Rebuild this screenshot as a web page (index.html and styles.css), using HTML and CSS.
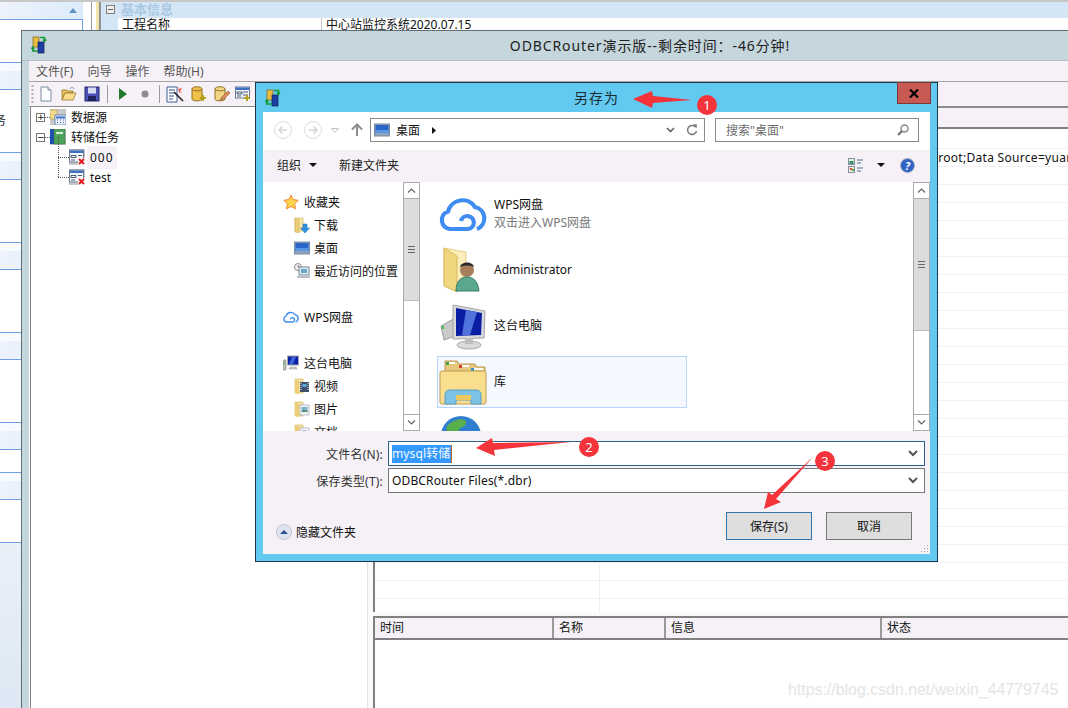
FILE: index.html
```html
<!DOCTYPE html>
<html lang="zh-CN">
<head>
    <meta charset="UTF-8">
    <title>ODBCRouter 另存为</title>
    <link rel="stylesheet" href="styles.css">
</head>
<body>
    <svg class="sprite" xmlns="http://www.w3.org/2000/svg">
        <symbol id="i-app" viewBox="0 0 16 18">
            <rect x="2" y="1" width="6" height="10" fill="#e9bb3f" stroke="#7d6420" stroke-width=".7"/>
            <rect x="7" y="6" width="6" height="11" fill="#1c3ea6" stroke="#10204f" stroke-width=".7"/>
            <path d="M9 1.500h4.500v3.500M12 3.500l1.500 2 1.500-2" fill="none" stroke="#179a34" stroke-width="1.600"/>
            <path d="M7 15H1.800v-3.500M.4 13l1.400-2 1.500 2" fill="none" stroke="#179a34" stroke-width="1.600"/>
        </symbol>
        <symbol id="i-new" viewBox="0 0 16 16">
            <path d="M3 1h7l3 3v11H3z" fill="#fbfdff" stroke="#7d8ea3"/>
            <path d="M10 1v3h3" fill="#dfe7f2" stroke="#7d8ea3"/>
        </symbol>
        <symbol id="i-open" viewBox="0 0 16 16">
            <path d="M1 4h5l1 1h5v2H4L1 14z" fill="#e8c25e" stroke="#9a7a2c" stroke-width=".8"/>
            <path d="M1 14l3-7h11l-3 7z" fill="#f7dc8c" stroke="#9a7a2c" stroke-width=".8"/>
            <path d="M9 3c1-2 3-2 4 0" fill="none" stroke="#5f87b5"/>
        </symbol>
        <symbol id="i-save" viewBox="0 0 16 16">
            <rect x="1" y="1" width="14" height="14" fill="#4c51b8" stroke="#25286e"/>
            <rect x="4" y="1.500" width="8" height="6" fill="#d7dcf2"/>
            <rect x="4" y="10" width="8" height="5" fill="#1f2258"/>
        </symbol>
        <symbol id="i-wand" viewBox="0 0 18 18">
            <path d="M1 2h10v15H1z" fill="#fff" stroke="#3a5f95"/>
            <path d="M3 5h6M3 8h5M3 11h5M3 14h4" stroke="#2c4f8a"/>
            <path d="M8 7l9 9" stroke="#222" stroke-width="1.600"/>
            <path d="M12 1l1 3 3-1-2 3 2 2-3-1" fill="#e8452e"/>
        </symbol>
        <symbol id="i-dbadd" viewBox="0 0 16 16">
            <path d="M1 3c0-3 10-3 10 0v10c0 2.500-10 2.500-10 0z" fill="#eec04a" stroke="#8f7125"/>
            <path d="M1 3c0 2.500 10 2.500 10 0" fill="none" stroke="#8f7125"/>
            <path d="M12 9v6M9 12h6" stroke="#b6a21d" stroke-width="2"/>
        </symbol>
        <symbol id="i-dbedit" viewBox="0 0 16 16">
            <path d="M1 3c0-3 10-3 10 0v10c0 2.500-10 2.500-10 0z" fill="#f2d784" stroke="#8f7125"/>
            <path d="M1 3c0 2.500 10 2.500 10 0" fill="none" stroke="#8f7125"/>
            <path d="M6 14l2-3 6-6 2 2-6 6z" fill="#e08a5a" stroke="#7c5a33" stroke-width=".6"/>
        </symbol>
        <symbol id="i-tabadd" viewBox="0 0 16 16">
            <rect x="0.500" y="1" width="14" height="11" fill="#f2f5fa" stroke="#6a7a92"/>
            <rect x="1" y="1.500" width="13" height="2.500" fill="#3d6fc2"/>
            <path d="M2 6h5v2H2zM8 6h5M8 9h5M2 10h4" fill="none" stroke="#4a5a72"/>
            <path d="M12 9v6M9 12h6" stroke="#b6a21d" stroke-width="2"/>
        </symbol>
        <symbol id="i-source" viewBox="0 0 16 16">
            <rect width="16" height="16" fill="#c9c9c9"/>
            <path d="M0 1h7v9H0z" fill="#f3d98a" stroke="#b79a45" stroke-width=".6"/>
            <rect x="5" y="6" width="11" height="10" fill="#eef3fb" stroke="#4f73ad" stroke-width=".8"/>
            <path d="M6 8.500h9" stroke="#3d6fc2" stroke-width="2"/>
            <path d="M7 11h1M10 11h1M13 11h1M7 13.500h1M10 13.500h1M13 13.500h1" stroke="#3a5f95"/>
        </symbol>
        <symbol id="i-book" viewBox="0 0 16 16">
            <rect width="16" height="16" fill="#c9c9c9"/>
            <rect x="0" y="0" width="4" height="15" fill="#1d4fb0"/>
            <rect x="4" y="0" width="11" height="15" fill="#4ea35a" stroke="#2f6f3a" stroke-width=".6"/>
            <rect x="6" y="3" width="7" height="2" fill="#d7eed9"/>
        </symbol>
        <symbol id="i-task" viewBox="0 0 16 16">
            <rect width="16" height="16" fill="#c9c9c9"/>
            <rect x="0.500" y="1" width="14" height="12" fill="#f5f7fb" stroke="#6a7a92"/>
            <rect x="1" y="1.500" width="13" height="2.500" fill="#3d6fc2"/>
            <path d="M2 6.500h5v2H2zM9 6.500h4M9 9.500h4M2 11h4" fill="none" stroke="#4a5a72"/>
            <rect x="9" y="9" width="7" height="7" fill="#fff"/>
            <path d="M10 10l5 5M15 10l-5 5" stroke="#e01b24" stroke-width="2"/>
        </symbol>
        <symbol id="i-star" viewBox="0 0 16 16">
            <path d="M8 1l2.200 4.600 5 .7-3.600 3.500.9 5L8 12.400 3.500 14.800l.9-5L.8 6.300l5-.7z" fill="#fbd24f" stroke="#ef8b2c"/>
        </symbol>
        <symbol id="i-folder" viewBox="0 0 16 16">
            <path d="M1 1h8v13H1z" fill="#f6e3a2" stroke="#d4b765" stroke-width=".7"/>
            <path d="M1 1l4 2v13l-4-1z" fill="#edcd78" stroke="#c9a850" stroke-width=".5"/>
            <path d="M9 7h4v4h2.500L11 16l-4.500-5H9z" fill="#2f8fe0" stroke="#1d6fb5" stroke-width=".5"/>
        </symbol>
        <symbol id="i-desk" viewBox="0 0 16 14">
            <rect x="0.500" y="1" width="15" height="12" fill="#8ea3bb" stroke="#7a8ca3"/>
            <rect x="1.500" y="2" width="13" height="8" fill="#2a66c8"/>
            <rect x="1.500" y="7" width="13" height="3" fill="#5a97e2"/>
        </symbol>
        <symbol id="i-recent" viewBox="0 0 16 16">
            <circle cx="4" cy="4" r="3.500" fill="#f2f2f2" stroke="#8b8b8b"/>
            <path d="M4 2v2h2" fill="none" stroke="#666" stroke-width=".7"/>
            <rect x="5" y="4" width="10" height="8" fill="#dfe9f2" stroke="#7d8a96"/>
            <rect x="7" y="6" width="6" height="4" fill="#6aa8c9"/>
            <path d="M3 13h13v2H3z" fill="#b9bec4"/>
        </symbol>
        <symbol id="i-cloud" viewBox="0 0 48 40">
            <path d="M14 35h-3A9 9 0 0 1 9 17.500 15 15 0 0 1 36 13a11.500 11.500 0 0 1 2 22M14 35h15a6.500 6.500 0 1 0-7-8" fill="none" stroke="#3f8cf2" stroke-width="4.200"/>
        </symbol>
        <symbol id="i-pc" viewBox="0 0 16 16">
            <rect x="0" y="5" width="3" height="10" fill="#bcbcbc" stroke="#777" stroke-width=".5"/>
            <rect x="1" y="7" width="1" height="2" fill="#3bbb3b"/>
            <rect x="4.500" y="1" width="11" height="9" fill="#0c1fa8" stroke="#a7a9ad"/>
            <path d="M9 2l4 0-3 7H6z" fill="#3f66d8"/>
            <path d="M7 12h6l1 2H6z" fill="#cfcfcf" stroke="#8f8f8f" stroke-width=".5"/>
        </symbol>
        <symbol id="i-video" viewBox="0 0 16 16">
            <path d="M1 1h8v14H1z" fill="#f6e3a2" stroke="#d4b765" stroke-width=".7"/>
            <path d="M1 1l4 2v13l-4-1z" fill="#edcd78"/>
            <rect x="6" y="4" width="9" height="10" fill="#40506a"/>
            <path d="M7 5v8M14 5v8" stroke="#d9e2ee" stroke-dasharray="1 1"/>
            <rect x="8.500" y="6" width="4" height="3" fill="#5fa7d9"/>
        </symbol>
        <symbol id="i-pic" viewBox="0 0 16 16">
            <path d="M1 1h8v14H1z" fill="#f6e3a2" stroke="#d4b765" stroke-width=".7"/>
            <path d="M1 1l4 2v13l-4-1z" fill="#edcd78"/>
            <rect x="6" y="4" width="9" height="10" fill="#f2f4f7" stroke="#9aa5b1" stroke-width=".7"/>
            <rect x="7.500" y="6" width="6" height="5" fill="#7ab3c9"/>
            <path d="M7.500 11l2-2.500 2 1.500 2-1v2z" fill="#55825f"/>
        </symbol>
        <symbol id="i-doc" viewBox="0 0 16 16">
            <path d="M1 1h8v14H1z" fill="#f6e3a2" stroke="#d4b765" stroke-width=".7"/>
            <path d="M1 1l4 2v13l-4-1z" fill="#edcd78"/>
            <rect x="6" y="4" width="9" height="10" fill="#f7f8fa" stroke="#9aa5b1" stroke-width=".7"/>
            <path d="M8 7h5M8 9h5M8 11h5" stroke="#6d8fb5"/>
        </symbol>
    </svg>

    <!-- 后面那个窗口，只露出一点 -->
    <div class="back-window">
        <div class="side-panel">
            <div class="side-head first"><span class="side-arrow"></span></div>
            <div class="side-body sb-short"></div>
            <div class="side-head"></div>
            <div class="side-body sb-tall"><span class="side-text">务</span></div>
            <div class="side-head"></div>
            <div class="side-body sb-tall"></div>
            <div class="side-head"></div>
            <div class="side-body sb-tall"></div>
            <div class="side-head"></div>
            <div class="side-body sb-tall"></div>
            <div class="side-head"></div>
            <div class="side-body sb-tiny"></div>
            <div class="side-head"></div>
            <div class="side-body sb-short"></div>
            <div class="side-rest"></div>
        </div>
        <div class="back-splitter"></div>
        <div class="prop-grid">
            <div class="prop-group">
                <span class="prop-toggle"></span>
                <span>基本信息</span>
            </div>
            <div class="prop-row">
                <div class="prop-name">工程名称</div>
                <div class="prop-value">中心站监控系统2020.07.15</div>
            </div>
        </div>
    </div>

    <div class="main-window">
        <div class="main-title">
            <svg class="main-title-icon" width="16" height="18"><use href="#i-app"/></svg>
            <span>ODBCRouter演示版--剩余时间：-46分钟!</span>
        </div>
        <div class="main-inner">
            <div class="menu-bar">
                <span>文件(F)</span>
                <span>向导</span>
                <span>操作</span>
                <span>帮助(H)</span>
            </div>
            <div class="tool-bar">
                <span class="gripper"></span>
                <svg width="16" height="16"><use href="#i-new"/></svg>
                <svg width="16" height="16"><use href="#i-open"/></svg>
                <svg width="16" height="16"><use href="#i-save"/></svg>
                <span class="tool-sep"></span>
                <svg class="tool-play" width="10" height="14" viewBox="0 0 10 14"><path d="M1 1l8 6-8 6z" fill="#1f7a2e"/></svg>
                <svg class="tool-stop" width="10" height="10" viewBox="0 0 10 10"><circle cx="5" cy="5" r="3.500" fill="#8d8d8d"/></svg>
                <span class="tool-sep"></span>
                <svg width="18" height="18"><use href="#i-wand"/></svg>
                <svg width="16" height="16"><use href="#i-dbadd"/></svg>
                <svg width="16" height="16"><use href="#i-dbedit"/></svg>
                <svg class="tool-last" width="16" height="16"><use href="#i-tabadd"/></svg>
            </div>
            <div class="main-body">
                <div class="tree">
                    <div class="tree-row">
                        <span class="expander">+</span>
                        <svg width="16" height="16"><use href="#i-source"/></svg>
                        <span class="tree-label">数据源</span>
                    </div>
                    <div class="tree-row">
                        <span class="expander">−</span>
                        <svg width="16" height="16"><use href="#i-book"/></svg>
                        <span class="tree-label">转储任务</span>
                    </div>
                    <div class="tree-row child">
                        <svg width="16" height="16"><use href="#i-task"/></svg>
                        <span class="tree-label selected">000</span>
                    </div>
                    <div class="tree-row child">
                        <svg width="16" height="16"><use href="#i-task"/></svg>
                        <span class="tree-label">test</span>
                    </div>
                </div>
                <div class="right-pane">
                    <div class="grid-area">
                        <div class="grid-head"></div>
                        <div class="grid-row"></div>
                        <div class="grid-row"><span class="conn-text">=root;Data Source=yuan</span></div>
                        <div class="grid-row"></div>
                        <div class="grid-row"></div>
                        <div class="grid-row"></div>
                        <div class="grid-row"></div>
                        <div class="grid-row"></div>
                        <div class="grid-row"></div>
                        <div class="grid-row"></div>
                        <div class="grid-row"></div>
                        <div class="grid-row"></div>
                        <div class="grid-row"></div>
                        <div class="grid-row"></div>
                        <div class="grid-row"></div>
                        <div class="grid-row"></div>
                        <div class="grid-row"></div>
                        <div class="grid-row"></div>
                        <div class="grid-row"></div>
                        <div class="grid-row"></div>
                        <div class="grid-row"></div>
                        <div class="grid-row"></div>
                        <div class="grid-row"></div>
                        <div class="grid-row"></div>
                        <div class="grid-row"></div>
                        <div class="grid-row"></div>
                        <div class="grid-row"></div>
                    </div>
                    <div class="log-area">
                        <div class="log-head">
                            <div class="log-col col-time">时间</div>
                            <div class="log-col col-name">名称</div>
                            <div class="log-col col-info">信息</div>
                            <div class="log-col col-state">状态</div>
                        </div>
                    </div>
                </div>
            </div>
        </div>
    </div>

    <div class="dialog">
        <div class="dialog-title">
            <svg class="dialog-icon" width="16" height="18"><use href="#i-app"/></svg>
            <span>另存为</span>
            <div class="dialog-close">
                <svg width="10" height="9" viewBox="0 0 10 9"><path d="M1 .5l8 8M9 .5l-8 8" stroke="#000" stroke-width="2.200"/></svg>
            </div>
        </div>
        <div class="dialog-client">
            <div class="nav-row">
                <svg class="nav-btn" width="18" height="18" viewBox="0 0 18 18"><circle cx="9" cy="9" r="8.500" fill="#fff" stroke="#dcdcdc"/><path d="M13 9H5M8.500 5.500L5 9l3.500 3.500" fill="none" stroke="#d4d4d4" stroke-width="1.500"/></svg>
                <svg class="nav-btn forward" width="18" height="18" viewBox="0 0 18 18"><circle cx="9" cy="9" r="8.500" fill="#fff" stroke="#dcdcdc"/><path d="M5 9h8M9.500 5.500L13 9l-3.500 3.500" fill="none" stroke="#d4d4d4" stroke-width="1.500"/></svg>
                <svg class="nav-drop" width="8" height="5" viewBox="0 0 8 5"><path d="M.5.500h7L4 4.500z" fill="#fff" stroke="#c4c4c4"/></svg>
                <svg class="nav-up" width="12" height="14" viewBox="0 0 12 14"><path d="M6 13V2M1 6.500L6 1.500l5 5" fill="none" stroke="#8c8c8c" stroke-width="2"/></svg>
                <div class="address">
                    <svg width="16" height="14"><use href="#i-desk"/></svg>
                    <span class="address-text">桌面</span>
                    <svg class="crumb" width="4" height="7" viewBox="0 0 4 7"><path d="M0 0l4 3.500L0 7z" fill="#111"/></svg>
                    <svg class="addr-chevron" width="9" height="6" viewBox="0 0 9 6"><path d="M1 1l3.500 3.500L8 1" fill="none" stroke="#666" stroke-width="1.600"/></svg>
                    <svg class="addr-refresh" width="12" height="12" viewBox="0 0 12 12"><path d="M9.500 3A4.500 4.500 0 1 0 10.500 7" fill="none" stroke="#7d7d7d" stroke-width="1.500"/><path d="M7 0l4 .500-.500 4z" fill="#7d7d7d"/></svg>
                </div>
                <div class="search">
                    <span>搜索"桌面"</span>
                    <svg width="12" height="12" viewBox="0 0 12 12"><circle cx="7.500" cy="4.500" r="3.500" fill="none" stroke="#8a8a8a" stroke-width="1.500"/><path d="M5 7L1 11" stroke="#6e6e6e" stroke-width="2"/></svg>
                </div>
            </div>
            <div class="dlg-tools">
                <span>组织</span>
                <span class="tri"></span>
                <span class="new-folder">新建文件夹</span>
                <svg class="view-icon" width="16" height="15" viewBox="0 0 16 15">
                    <rect x=".5" y=".5" width="6" height="6" fill="#e6f0e6" stroke="#7f8fa0"/>
                    <rect x="1.500" y="3" width="4" height="3" fill="#3f8f66"/>
                    <rect x=".5" y="8.500" width="6" height="6" fill="#f2ead2" stroke="#7f8fa0"/>
                    <rect x="2" y="10" width="2" height="2" fill="#d84a3a"/>
                    <rect x="4" y="11" width="2" height="2" fill="#4a9a4a"/>
                    <path d="M9 2h6M9 5h4M9 10h6M9 13h4" stroke="#4f6a8f"/>
                </svg>
                <span class="tri view-tri"></span>
                <svg class="help-icon" width="15" height="15" viewBox="0 0 15 15">
                    <circle cx="7.500" cy="7.500" r="7" fill="#2f62c4" stroke="#a9b3c2"/>
                    <text x="7.500" y="11.500" class="help-q">?</text>
                </svg>
            </div>
            <div class="browser">
                <div class="nav-pane">
                    <div class="nav-list">
                        <div class="nav-item"><svg width="16" height="16"><use href="#i-star"/></svg>收藏夹</div>
                        <div class="nav-item sub"><svg width="16" height="16"><use href="#i-folder"/></svg>下载</div>
                        <div class="nav-item sub"><svg width="16" height="14"><use href="#i-desk"/></svg>桌面</div>
                        <div class="nav-item sub"><svg width="16" height="16"><use href="#i-recent"/></svg>最近访问的位置</div>
                        <div class="nav-gap"></div>
                        <div class="nav-item"><svg width="16" height="14"><use href="#i-cloud"/></svg>WPS网盘</div>
                        <div class="nav-gap"></div>
                        <div class="nav-item"><svg width="16" height="16"><use href="#i-pc"/></svg>这台电脑</div>
                        <div class="nav-item sub"><svg width="16" height="16"><use href="#i-video"/></svg>视频</div>
                        <div class="nav-item sub"><svg width="16" height="16"><use href="#i-pic"/></svg>图片</div>
                        <div class="nav-item sub"><svg width="16" height="16"><use href="#i-doc"/></svg>文档</div>
                    </div>
                    <div class="scrollbar">
                        <div class="sb-btn"><svg width="9" height="5" viewBox="0 0 9 5"><path d="M1 4.500L4.500 1 8 4.500" fill="none" stroke="#666" stroke-width="1.200"/></svg></div>
                        <div class="sb-thumb short"><span class="sb-grip"></span></div>
                        <div class="sb-track"></div>
                        <div class="sb-btn"><svg width="9" height="5" viewBox="0 0 9 5"><path d="M1 .5L4.500 4 8 .5" fill="none" stroke="#666" stroke-width="1.200"/></svg></div>
                    </div>
                </div>
                <div class="file-pane">
                    <div class="file-list">
                        <div class="file-item">
                            <svg width="48" height="40"><use href="#i-cloud"/></svg>
                            <div class="file-text">
                                <div>WPS网盘</div>
                                <div class="file-sub">双击进入WPS网盘</div>
                            </div>
                        </div>
                        <div class="file-item">
                            <svg width="48" height="48" viewBox="0 0 48 48">
                                <path d="M5 2l22 4v34H5z" fill="#fbeeb8" stroke="#e5cf87"/>
                                <path d="M5 2l13 8v36L5 40z" fill="#f0d67f" stroke="#d6b95f"/>
                                <circle cx="28" cy="24" r="7" fill="#a77e5c"/>
                                <path d="M21 21c1-6 13-6 14 0-4-2-10-2-14 0z" fill="#2b2b2b"/>
                                <path d="M17 45c0-10 5-14 11-14s11 4 12 14z" fill="#5aa88e" stroke="#3c7d69"/>
                            </svg>
                            <div class="file-text">Administrator</div>
                        </div>
                        <div class="file-item">
                            <svg width="48" height="48" viewBox="0 0 48 48">
                                <path d="M2 24l14-8v18L5 38z" fill="#c9c9c9" stroke="#9b9b9b"/>
                                <rect x="3" y="24" width="2" height="3" fill="#3bbb3b"/>
                                <path d="M14 3l32 6-1 27-31 1z" fill="#d6d8db" stroke="#a1a3a6"/>
                                <path d="M17 6l26 5-1 22-25 1z" fill="#0a1ea3"/>
                                <path d="M27 8l11 2-7 23h-8z" fill="#4f74dd"/>
                                <ellipse cx="30" cy="43" rx="12" ry="4" fill="#d9d9d9" stroke="#a8a8a8"/>
                                <rect x="26" y="36" width="8" height="6" fill="#bdbdbd"/>
                            </svg>
                            <div class="file-text">这台电脑</div>
                        </div>
                        <div class="file-item picked">
                            <svg width="48" height="48" viewBox="0 0 48 48">
                                <path d="M6 3h12l2 3h16l2 3h8v6H6z" fill="#e6c97f" stroke="#b9994d"/>
                                <rect x="8" y="4" width="8" height="2" fill="#fff"/>
                                <rect x="7" y="4" width="3" height="3" fill="#3aa64a"/>
                                <rect x="20" y="7" width="10" height="2" fill="#fff"/>
                                <rect x="20" y="7" width="3" height="3" fill="#d8402e"/>
                                <rect x="32" y="10" width="12" height="2" fill="#fff"/>
                                <rect x="32" y="10" width="3" height="3" fill="#2f8fd0"/>
                                <rect x="1" y="13" width="46" height="33" rx="2" fill="#f8de8d" stroke="#bd9d52"/>
                                <path d="M6 46v-9q0-5 5-5h26q5 0 5 5v9H32v-4H17v4z" fill="#7cc2e4" stroke="#5a9fc6"/>
                                <rect x="17" y="37" width="15" height="5" fill="#ecc860"/>
                            </svg>
                            <div class="file-text">库</div>
                        </div>
                        <div class="file-item">
                            <svg width="48" height="48" viewBox="0 0 48 48">
                                <circle cx="22" cy="22" r="20" fill="#2f7fd0"/>
                                <path d="M8 12c6-6 12-8 18-6 3 4-1 7-5 8-2 5-6 9-10 8-3-2-4-6-3-10zM28 20c5-2 10-1 12 3-1 6-4 10-8 12-3-4-5-10-4-15z" fill="#58b04a"/>
                                <rect x="22" y="24" width="20" height="16" fill="#14359c" stroke="#c5c5c5"/>
                            </svg>
                        </div>
                    </div>
                    <div class="scrollbar">
                        <div class="sb-btn"><svg width="9" height="5" viewBox="0 0 9 5"><path d="M1 4.500L4.500 1 8 4.500" fill="none" stroke="#666" stroke-width="1.200"/></svg></div>
                        <div class="sb-thumb tall"><span class="sb-grip"></span></div>
                        <div class="sb-track"></div>
                        <div class="sb-btn"><svg width="9" height="5" viewBox="0 0 9 5"><path d="M1 .5L4.500 4 8 .5" fill="none" stroke="#666" stroke-width="1.200"/></svg></div>
                    </div>
                </div>
            </div>
            <div class="dlg-bottom">
                <div class="form-row">
                    <label>文件名(N):</label>
                    <div class="combo active">
                        <span class="sel-text">mysql转储</span>
                        <svg width="10" height="7" viewBox="0 0 10 7"><path d="M1 1l4 4 4-4" fill="none" stroke="#555" stroke-width="2"/></svg>
                    </div>
                </div>
                <div class="form-row">
                    <label>保存类型(T):</label>
                    <div class="combo">
                        <span>ODBCRouter Files(*.dbr)</span>
                        <svg width="10" height="7" viewBox="0 0 10 7"><path d="M1 1l4 4 4-4" fill="none" stroke="#555" stroke-width="2"/></svg>
                    </div>
                </div>
                <div class="dlg-footer">
                    <div class="hide-folders">
                        <svg width="16" height="16" viewBox="0 0 16 16"><circle cx="8" cy="8" r="7.500" fill="#dfe4ee" stroke="#c3c9d4"/><path d="M4 10l4-4 4 4z" fill="#2d4f8f"/></svg>
                        <span>隐藏文件夹</span>
                    </div>
                    <div class="btn default">保存(S)</div>
                    <div class="btn">取消</div>
                </div>
            </div>
            <svg class="resize-grip" width="9" height="9" viewBox="0 0 9 9"><path d="M7 1h1v1H7zM4 4h1v1H4zM7 4h1v1H7zM1 7h1v1H1zM4 7h1v1H4zM7 7h1v1H7z" fill="#9aa0a6"/></svg>
        </div>
    </div>

    <!-- 红色标注 -->
    <svg class="marks" width="1068" height="708" viewBox="0 0 1068 708">
        <path d="M633 99l19-8 1 5 39 4-39 3-1 5z" fill="#f5333a"/>
        <circle cx="707" cy="105" r="10" fill="#f5333a"/>
        <text x="707" y="110" class="mark-num">1</text>
        <path d="M476 448l16-10 1 5 78-1-77 8 1 6z" fill="#f5333a"/>
        <circle cx="589" cy="447" r="10" fill="#f5333a"/>
        <text x="589" y="452" class="mark-num">2</text>
        <path d="M764 509l4-17 4 3 41-38-37 42 5 3z" fill="#f5333a"/>
        <circle cx="825" cy="461" r="10" fill="#f5333a"/>
        <text x="825" y="466" class="mark-num">3</text>
    </svg>

    <div class="watermark">https://blog.csdn.net/weixin_44779745</div>
</body>
</html>
```

FILE: styles.css
```css
:root {
    --frame: #c5d6dd;
    --dialog-frame: #62c9f0;
    --panel: #f5f1f6;
    --line: #808080;
    --side-line: #6d9fe2;
}

* {
    box-sizing: border-box;
}

html, body {
    margin: 0;
    height: 100%;
}

body {
    position: relative;
    width: 1068px;
    height: 708px;
    overflow: hidden;
    background-color: #fff;
    font-family: "Noto Sans", "Noto Sans CJK SC", sans-serif;
    font-size: 12px;
    color: #111;
}

svg {
    flex-shrink: 0;
    display: block;
}

.sprite {
    position: absolute;
    width: 0;
    height: 0;
}

/* back window */
.back-window {
    display: flex;
    height: 30px;
    border-top: 2px solid #c8c8c8;
}

.side-panel {
    width: 83px;
    height: 706px;
    display: flex;
    flex-direction: column;
    flex-shrink: 0;
}

.side-head {
    height: 26px;
    flex-shrink: 0;
    position: relative;
    background: linear-gradient(to bottom, #f7faff 0, #f7faff 8px, transparent 8px),
                linear-gradient(to right, #eef3fc, #dcebfb);
}

.side-head.first {
    height: 17px;
    background: linear-gradient(to right, #eef3fc, #dcebfb);
}

.side-arrow {
    position: absolute;
    left: 69px;
    top: 6px;
    border-left: 4px solid transparent;
    border-right: 4px solid transparent;
    border-bottom: 5px solid #5f93c6;
}

.side-body {
    background-color: #fff;
    border-top: 1px solid var(--side-line);
    border-bottom: 1px solid var(--side-line);
    border-right: 1px solid var(--side-line);
    position: relative;
    flex-shrink: 0;
}

.sb-tiny { height: 24px; }
.sb-short { height: 44px; }
.sb-tall { height: 64px; }

.side-text {
    position: absolute;
    left: -6px;
    top: 21px;
    color: #1a1a1a;
}

.side-rest {
    flex: 1;
    background: linear-gradient(to bottom, #e9f0f8, #dde8f4);
}

.back-splitter {
    width: 17px;
    height: 28px;
    flex-shrink: 0;
    background: linear-gradient(to right, #fff 0, #fff 8px, #9a9a9a 8px, #9a9a9a 9px, #fff 9px, #fff 13px, #f3e4ad 13px, #f3e4ad 16px, #8c8c8c 16px);
}

.prop-grid {
    flex: 1;
    border-left: 1px solid #9a9a9a;
}

.prop-group {
    height: 16px;
    background-color: #d4e5f6;
    display: flex;
    align-items: center;
    gap: 6px;
    padding: 0 0 1px 5px;
    font-size: 13px;
    line-height: 15px;
    font-weight: bold;
    color: #a9c8e2;
}

.prop-toggle {
    width: 9px;
    height: 9px;
    border: 1px solid #808080;
    background: linear-gradient(#666, #666) center / 5px 1px no-repeat #eee;
}

.prop-row {
    display: flex;
    height: 12px;
    overflow: hidden;
    line-height: 13px;
    background-color: #fff;
    border-left: 17px solid #d4e5f6;
}

.prop-name {
    width: 204px;
    padding-left: 4px;
    border-right: 1px solid #c8c8c8;
}

.prop-value {
    padding-left: 4px;
}

/* main window */
.main-window {
    position: absolute;
    left: 21px;
    top: 30px;
    width: 1047px;
    height: 678px;
    overflow: hidden;
    background-color: var(--frame);
    border: 1px solid #5f6f74;
    border-right: none;
    border-bottom: none;
}

.main-title {
    height: 30px;
    position: relative;
    padding-left: 210px;
    text-align: center;
    font-size: 14px;
    letter-spacing: .9px;
    line-height: 30px;
    color: #222;
    border-bottom: 1px solid #b3bfc5;
}

.main-title-icon {
    position: absolute;
    left: 9px;
    top: 5px;
}

.main-inner {
    margin-left: 7px;
    display: flex;
    flex-direction: column;
    height: 660px;
}

.menu-bar {
    height: 21px;
    display: flex;
    align-items: center;
    background-color: var(--panel);
    border-bottom: 1px solid #a5a5a5;
    padding-left: 7px;
    gap: 14px;
    color: #555;
}

.tool-bar {
    height: 25px;
    display: flex;
    align-items: center;
    background-color: var(--panel);
    border-bottom: 1px solid #8c8c8c;
    padding-left: 2px;
}

.gripper {
    width: 3px;
    height: 20px;
    margin-right: 4px;
    background: radial-gradient(circle, #b5b5b5 40%, transparent 50%) 0 0 / 3px 4px;
}

.tool-bar svg {
    margin-right: 7px;
}

.tool-sep {
    width: 1px;
    height: 18px;
    background-color: #9a9a9a;
    margin-right: 6px;
}

.tool-bar .tool-play {
    margin: 0 12px 0 4px;
}

.tool-bar .tool-stop {
    margin-right: 9px;
}

.tool-bar .tool-last {
    margin-left: -2px;
}

.main-body {
    flex: 1;
    display: flex;
    min-height: 0;
    background-color: #fafafa;
}

.tree {
    width: 338px;
    flex-shrink: 0;
    margin-left: 1px;
    height: 100%;
    background-color: #fff;
    border-left: 1px solid var(--line);
    border-right: 1px solid #e4e4e4;
}

.tree-row {
    height: 20px;
    display: flex;
    align-items: center;
    position: relative;
    padding-left: 5px;
}

.expander {
    width: 9px;
    height: 9px;
    border: 1px solid #777;
    font-size: 9px;
    line-height: 6px;
    text-align: center;
    font-family: "DejaVu Sans", sans-serif;
    margin-right: 5px;
    background-color: #fff;
}

.tree-label {
    margin-left: 5px;
}

.tree-row::before {
    content: "";
    position: absolute;
    left: 14px;
    top: 10px;
    width: 5px;
    border-top: 1px dotted #555;
}

.tree-row.child {
    padding-left: 38px;
}

.tree-row.child::before {
    left: 27px;
    width: 11px;
}

.tree-row.child::after {
    content: "";
    position: absolute;
    left: 27px;
    top: -10px;
    height: 20px;
    border-left: 1px dotted #555;
}

.tree-label.selected {
    background-color: var(--panel);
    padding: 3px;
    margin-left: 2px;
    letter-spacing: 1px;
}

.right-pane {
    flex: 1;
    min-width: 0;
    margin-left: 5px;
    display: flex;
    flex-direction: column;
}

.grid-area {
    height: 505px;
    flex-shrink: 0;
    border-left: 2px solid var(--line);
    background: linear-gradient(#f1f1f1, #f1f1f1) 224px 0 / 1px 100% no-repeat #fff;
    overflow: hidden;
}

.grid-head {
    height: 22px;
    background-color: var(--panel);
    border-top: 1px solid #8c8c8c;
    border-bottom: 2px solid var(--line);
}

.grid-row {
    height: 18px;
    border-bottom: 1px solid #f0f0f0;
    white-space: nowrap;
    line-height: 17px;
}

.grid-row:nth-child(2) {
    height: 20px;
}

.conn-text {
    padding-left: 556px;
    letter-spacing: .3px;
}

.log-area {
    margin-top: 4px;
    border-left: 2px solid var(--line);
    border-top: 2px solid var(--line);
    flex: 1;
    background-color: #fff;
}

.log-head {
    display: flex;
    height: 22px;
    background-color: var(--panel);
    border-bottom: 2px solid var(--line);
}

.log-col {
    border-right: 2px solid #999;
    padding-left: 5px;
    line-height: 20px;
}

.col-time { width: 179px; }
.col-name { width: 112px; }
.col-info { width: 216px; }

.col-state {
    flex: 1;
    border-right: none;
}

/* save dialog */
.dialog {
    position: absolute;
    left: 255px;
    top: 82px;
    width: 683px;
    height: 480px;
    background-color: var(--dialog-frame);
    border: 1px solid #1d3848;
    padding: 0 7px 7px;
    display: flex;
    flex-direction: column;
}

.dialog-title {
    height: 29px;
    position: relative;
    text-align: center;
    font-size: 14px;
    line-height: 30px;
    letter-spacing: 1px;
    color: #1a2a30;
    flex-shrink: 0;
}

.dialog-icon {
    position: absolute;
    left: 2px;
    top: 6px;
}

.dialog-close {
    position: absolute;
    right: -1px;
    top: -1px;
    width: 34px;
    height: 22px;
    background-color: #c75b54;
    border: 1px solid #7b3a35;
    display: flex;
    align-items: center;
    justify-content: center;
}

.dialog-client {
    flex: 1;
    position: relative;
    display: flex;
    flex-direction: column;
    background-color: #fff;
    min-height: 0;
}

.nav-row {
    height: 38px;
    flex-shrink: 0;
    display: flex;
    align-items: center;
    padding: 0 0 2px 11px;
}

.nav-btn.forward {
    margin-left: 12px;
}

.nav-drop {
    margin-left: 9px;
}

.nav-up {
    margin-left: 12px;
}

.address {
    width: 335px;
    height: 24px;
    margin-left: 7px;
    border: 1px solid #8a8a8a;
    display: flex;
    align-items: center;
    padding-left: 3px;
}

.address-text {
    margin-left: 6px;
}

.crumb {
    margin-left: 12px;
}

.addr-chevron {
    margin-left: auto;
}

.addr-refresh {
    margin: 0 6px 0 11px;
}

.search {
    width: 204px;
    height: 24px;
    margin-left: 10px;
    border: 1px solid #8a8a8a;
    display: flex;
    align-items: center;
    justify-content: space-between;
    padding: 0 9px 0 10px;
    color: #6d6d6d;
}

.dlg-tools {
    height: 32px;
    flex-shrink: 0;
    display: flex;
    align-items: center;
    background-color: var(--panel);
    padding: 0 15px 2px 14px;
    color: #222;
}

.tri {
    width: 0;
    height: 0;
    margin-left: 8px;
    border-left: 4px solid transparent;
    border-right: 4px solid transparent;
    border-top: 4px solid #111;
}

.new-folder {
    margin-left: 22px;
}

.view-icon {
    margin-left: auto;
}

.view-tri {
    margin-left: 13px;
}

.help-icon {
    margin-left: 15px;
}

.help-q {
    font-size: 11px;
    font-weight: bold;
    font-style: italic;
    fill: #fff;
    text-anchor: middle;
}

.browser {
    height: 249px;
    flex-shrink: 0;
    display: flex;
    overflow: hidden;
}

.nav-pane {
    width: 157px;
    display: flex;
    flex-shrink: 0;
}

.nav-list {
    flex: 1;
    padding-top: 8px;
}

.nav-item {
    height: 23px;
    display: flex;
    align-items: center;
    gap: 5px;
    padding-left: 20px;
}

.nav-item.sub {
    padding-left: 31px;
    gap: 4px;
}

.nav-gap {
    height: 23px;
}

.scrollbar {
    width: 17px;
    height: 249px;
    flex-shrink: 0;
    display: flex;
    flex-direction: column;
    background-color: #fff;
    border-left: 1px solid #ababab;
    border-right: 1px solid #ababab;
}

.sb-btn {
    height: 17px;
    flex-shrink: 0;
    display: flex;
    align-items: center;
    justify-content: center;
    border-top: 1px solid #ababab;
    border-bottom: 1px solid #ababab;
}

.sb-thumb {
    background-color: #dcdcdc;
    display: flex;
    align-items: center;
    justify-content: center;
    flex-shrink: 0;
    border-bottom: 1px solid #bbb;
}

.sb-thumb.short { height: 102px; }
.sb-thumb.tall { height: 132px; }

.sb-grip {
    width: 7px;
    height: 7px;
    background: repeating-linear-gradient(to bottom, #666 0, #666 1px, transparent 1px, transparent 3px);
}

.sb-track {
    flex: 1;
}

.file-pane {
    flex: 1;
    display: flex;
    justify-content: space-between;
}

.file-list {
    flex: 1;
    padding: 6px 0 0 17px;
    display: flex;
    flex-direction: column;
    gap: 4px;
}

.file-item {
    width: 250px;
    height: 52px;
    flex-shrink: 0;
    display: flex;
    align-items: center;
    padding-left: 1px;
    border: 1px solid transparent;
}

.file-item.picked {
    background-color: #f5f9ff;
    border-color: #b8d6fb;
}

.file-text {
    margin-left: 7px;
    line-height: 18px;
}

.file-sub {
    color: #7a7a7a;
}

.dlg-bottom {
    flex: 1;
    background-color: var(--panel);
    padding-top: 10px;
}

.form-row {
    display: flex;
    align-items: center;
    margin-bottom: 2px;
}

.form-row label {
    width: 120px;
    text-align: right;
    letter-spacing: .2px;
    color: #333;
}

.combo {
    width: 537px;
    height: 25px;
    margin-left: 5px;
    border: 1px solid #777;
    background-color: #fff;
    display: flex;
    align-items: center;
    justify-content: space-between;
    padding: 0 6px 0 3px;
    letter-spacing: .13px;
}

.combo.active {
    border-color: #2c628b;
}

.sel-text {
    background-color: #3399ff;
    color: #f2f8ff;
    line-height: 18px;
    padding-right: 1px;
    border-right: 1px solid #c46a1e;
}

.dlg-footer {
    display: flex;
    align-items: center;
    margin-top: 18px;
    padding: 0 18px 0 13px;
}

.hide-folders {
    display: flex;
    align-items: center;
    gap: 4px;
    margin: 12px auto 0 0;
}

.btn {
    width: 86px;
    height: 28px;
    margin-left: 14px;
    background-color: #dedede;
    border: 1px solid #777;
    display: flex;
    align-items: center;
    justify-content: center;
}

.btn.default {
    border-color: #2c75ad;
}

.resize-grip {
    position: absolute;
    right: 1px;
    bottom: 1px;
}

/* annotations */
.marks {
    position: absolute;
    left: 0;
    top: 0;
}

.mark-num {
    font-size: 13px;
    fill: #fff;
    text-anchor: middle;
    font-family: "Noto Sans", sans-serif;
}

.watermark {
    position: absolute;
    left: 788px;
    top: 681px;
    font-family: "Liberation Sans", sans-serif;
    font-size: 15.900px;
    color: #e4e4e4;
    white-space: nowrap;
}
```
